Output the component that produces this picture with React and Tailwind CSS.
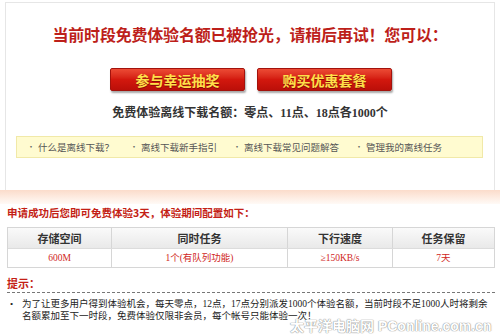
export default function App() {
  const sans = { fontFamily: '"Noto Sans CJK SC", "Noto Sans", sans-serif' };
  const serif = { fontFamily: '"Liberation Serif", "Noto Sans CJK SC", serif' };
  const links = ["什么是离线下载？", "离线下载新手指引", "离线下载常见问题解答", "管理我的离线任务"];
  const cols = [
    { w: "w-[104px]", h: "存储空间", d: "600M" },
    { w: "w-[176px]", h: "同时任务", d: "1个(有队列功能)" },
    { w: "w-[105px]", h: "下行速度", d: "≥150KB/s" },
    { w: "flex-1", h: "任务保留", d: "7天" },
  ];
  return (
    <div className="relative w-[500px] h-[334px] overflow-hidden bg-white" style={sans}>
      <div className="mx-[5px] mt-[2px] h-[188px] border border-b-0 border-[#e6e6e6] flex flex-col items-center">
        <div className="mt-[21px] h-[20px] leading-[20px] text-[16px] font-bold text-[#bd1f1a] tracking-[-0.2px]">
          当前时段免费体验名额已被抢光，请稍后再试！您可以：
        </div>
        <div className="mt-[24px] flex gap-[12px] pl-[2px]">
          {["参与幸运抽奖", "购买优惠套餐"].map((t) => (
            <div
              key={t}
              className="w-[135px] h-[23px] rounded-[2px] border border-[#a3120c] bg-gradient-to-b from-[#ec4a34] via-[#d3180e] to-[#bb0f09] shadow-[1px_2px_2px_rgba(0,0,0,0.35)] flex items-center justify-center text-[14px] font-bold text-[#ffe04a] leading-none [text-shadow:0_1px_0_#8a0a06]"
            >
              {t}
            </div>
          ))}
        </div>
        <div className="mt-[14px] h-[16px] leading-[16px] text-[12px] font-bold text-[#333]" style={serif}>
          免费体验离线下载名额：零点、11点、18点各1000个
        </div>
        <div className="mt-[15px] self-stretch ml-[10px] mr-[11px] h-[22px] bg-[#fffbd0] border border-[#f1e9a8] flex items-center pl-[10px] gap-[16px] text-[9.5px] text-[#555]">
          {links.map((l) => (
            <div key={l} className="flex items-center gap-[3px]">
              <span className="text-[8px] text-[#666]">•</span>
              <span>{l}</span>
            </div>
          ))}
        </div>
      </div>
      <div className="h-[14px] bg-gradient-to-b from-[#fbdccb] to-[#fffaf6]" />
      <div className="px-[7px] pr-[5px]">
        <div className="mt-[2px] h-[14px] leading-[14px] text-[10.5px] font-bold text-[#c41f16]">
          申请成功后您即可免费体验3天，体验期间配置如下：
        </div>
        <div className="mt-[7px] border border-[#d6d6d6]">
          <div className="flex h-[21px] bg-gradient-to-b from-[#fafafa] to-[#e9e9e9] border-b border-[#dcdcdc]">
            {cols.map((c, i) => (
              <div
                key={c.h}
                className={`${c.w} flex items-center justify-center text-[11px] font-bold text-[#333] ${i < 3 ? "border-r border-[#d6d6d6]" : ""}`}
              >
                {c.h}
              </div>
            ))}
          </div>
          <div className="flex h-[18px] bg-white">
            {cols.map((c, i) => (
              <div
                key={c.h}
                className={`${c.w} flex items-center justify-center text-[9.5px] text-[#d0261c] ${i < 3 ? "border-r border-[#d6d6d6]" : ""}`}
                style={serif}
              >
                {c.d}
              </div>
            ))}
          </div>
        </div>
        <div className="mt-[8px] h-[14px] leading-[14px] text-[11px] font-bold text-[#c41f16]">提示：</div>
        <div className="mt-[2px] border-t border-dashed border-[#777]" />
        <div className="mt-[5px] flex text-[9.5px] leading-[12px] text-[#222]" style={serif}>
          <span className="w-[15px] pl-[3px] text-[9px]">•</span>
          <div>
            <div className="whitespace-nowrap">为了让更多用户得到体验机会，每天零点，12点，17点分别派发1000个体验名额，当前时段不足1000人时将剩余</div>
            <div className="whitespace-nowrap">名额累加至下一时段，免费体验仅限非会员，每个帐号只能体验一次！</div>
          </div>
        </div>
      </div>
      <div className="absolute left-[290px] top-[318px] text-[14px] font-bold text-white leading-[16px] whitespace-nowrap opacity-90 [text-shadow:0_0_1px_#777,0_0_1px_#777]" style={{ fontFamily: '"Liberation Sans", "Noto Sans CJK SC", sans-serif' }}>
        太平洋电脑网 PConline.com.cn
      </div>
    </div>
  );
}
